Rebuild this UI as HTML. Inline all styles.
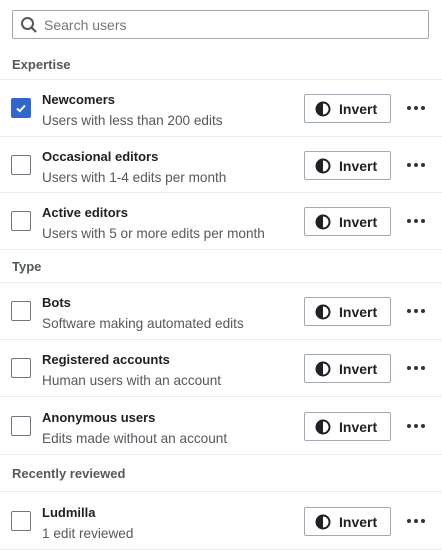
<!DOCTYPE html>
<html><head><style>
*{box-sizing:border-box;margin:0;padding:0}
body{width:442px;height:555px;background:#fff;font-family:"Liberation Sans",sans-serif;color:#202122;position:relative;overflow:hidden}
.search{position:absolute;left:12px;top:10px;width:417px;height:29px;border:1px solid #a2a9b1;border-radius:2px}
.search span{position:absolute;left:31px;top:6px;font-size:14px;color:#72777d}
.search svg{position:absolute;left:7px;top:5px}
.hdr{position:absolute;left:12px;font-size:13px;color:#54595d;font-weight:bold}
.line{position:absolute;left:0;width:442px;height:1px;background:#eaecf0}
.row{position:absolute;left:0;width:442px;height:56px}
.cb{position:absolute;left:11px;top:18px;width:20px;height:20px;border:1px solid #72777d;border-radius:2px;background:#fff}
.cb.on{background:#36c;border-color:#36c}
.t{position:absolute;left:42px;top:12px;font-size:13px;font-weight:bold}
.s{position:absolute;left:42px;top:33px;font-size:13.6px;color:#54595d}
.btn{position:absolute;left:304px;top:14px;width:87px;height:29px;border:1px solid #a2a9b1;border-radius:2px;font-size:14px;font-weight:bold;color:#202122}
.btn svg{position:absolute;left:10px;top:6px}
.btn span{position:absolute;left:34px;top:6px}
.dots{position:absolute;left:407px;top:26px}
.dots i{position:absolute;top:0;width:4px;height:4px;border-radius:50%;background:#333}
</style></head><body>
<div class="search"><svg width="18" height="18" viewBox="0 0 18 18"><circle cx="7.5" cy="7.5" r="5.5" fill="none" stroke="#54595d" stroke-width="2"/><path d="M11.5 11.5L16 16" stroke="#54595d" stroke-width="2.2"/></svg><span>Search users</span></div>
<div class="hdr" style="top:57px">Expertise</div>
<div class="line" style="top:79px"></div>

<div class="row" style="top:80px"><div class="cb on"><svg width="18" height="18" viewBox="0 0 18 18"><path d="M5 9.5l2.8 2.6L13 6.5" fill="none" stroke="#fff" stroke-width="2"/></svg></div><div class="t">Newcomers</div><div class="s">Users with less than 200 edits</div><div class="btn"><svg width="16" height="16" viewBox="0 0 16 16"><circle cx="8" cy="8" r="6.5" fill="none" stroke="#202122" stroke-width="2"/><path d="M8 1.5a6.5 6.5 0 0 0 0 13z" fill="#202122"/></svg><span>Invert</span></div><div class="dots"><i style="left:0"></i><i style="left:7px"></i><i style="left:14px"></i></div></div>
<div class="line" style="top:136px"></div>

<div class="row" style="top:137px"><div class="cb"></div><div class="t">Occasional editors</div><div class="s">Users with 1-4 edits per month</div><div class="btn"><svg width="16" height="16" viewBox="0 0 16 16"><circle cx="8" cy="8" r="6.5" fill="none" stroke="#202122" stroke-width="2"/><path d="M8 1.5a6.5 6.5 0 0 0 0 13z" fill="#202122"/></svg><span>Invert</span></div><div class="dots"><i style="left:0"></i><i style="left:7px"></i><i style="left:14px"></i></div></div>
<div class="line" style="top:192px"></div>

<div class="row" style="top:193px"><div class="cb"></div><div class="t">Active editors</div><div class="s">Users with 5 or more edits per month</div><div class="btn"><svg width="16" height="16" viewBox="0 0 16 16"><circle cx="8" cy="8" r="6.5" fill="none" stroke="#202122" stroke-width="2"/><path d="M8 1.5a6.5 6.5 0 0 0 0 13z" fill="#202122"/></svg><span>Invert</span></div><div class="dots"><i style="left:0"></i><i style="left:7px"></i><i style="left:14px"></i></div></div>
<div class="line" style="top:249px"></div>

<div class="hdr" style="top:259px">Type</div>
<div class="line" style="top:282px"></div>

<div class="row" style="top:283px"><div class="cb"></div><div class="t">Bots</div><div class="s">Software making automated edits</div><div class="btn"><svg width="16" height="16" viewBox="0 0 16 16"><circle cx="8" cy="8" r="6.5" fill="none" stroke="#202122" stroke-width="2"/><path d="M8 1.5a6.5 6.5 0 0 0 0 13z" fill="#202122"/></svg><span>Invert</span></div><div class="dots"><i style="left:0"></i><i style="left:7px"></i><i style="left:14px"></i></div></div>
<div class="line" style="top:339px"></div>

<div class="row" style="top:340px"><div class="cb"></div><div class="t">Registered accounts</div><div class="s">Human users with an account</div><div class="btn"><svg width="16" height="16" viewBox="0 0 16 16"><circle cx="8" cy="8" r="6.5" fill="none" stroke="#202122" stroke-width="2"/><path d="M8 1.5a6.5 6.5 0 0 0 0 13z" fill="#202122"/></svg><span>Invert</span></div><div class="dots"><i style="left:0"></i><i style="left:7px"></i><i style="left:14px"></i></div></div>
<div class="line" style="top:396px"></div>

<div class="row" style="top:398px"><div class="cb"></div><div class="t">Anonymous users</div><div class="s">Edits made without an account</div><div class="btn"><svg width="16" height="16" viewBox="0 0 16 16"><circle cx="8" cy="8" r="6.5" fill="none" stroke="#202122" stroke-width="2"/><path d="M8 1.5a6.5 6.5 0 0 0 0 13z" fill="#202122"/></svg><span>Invert</span></div><div class="dots"><i style="left:0"></i><i style="left:7px"></i><i style="left:14px"></i></div></div>
<div class="line" style="top:454px"></div>

<div class="hdr" style="top:466px">Recently reviewed</div>
<div class="line" style="top:491px"></div>

<div class="row" style="top:493px"><div class="cb"></div><div class="t">Ludmilla</div><div class="s">1 edit reviewed</div><div class="btn"><svg width="16" height="16" viewBox="0 0 16 16"><circle cx="8" cy="8" r="6.5" fill="none" stroke="#202122" stroke-width="2"/><path d="M8 1.5a6.5 6.5 0 0 0 0 13z" fill="#202122"/></svg><span>Invert</span></div><div class="dots"><i style="left:0"></i><i style="left:7px"></i><i style="left:14px"></i></div></div>
<div class="line" style="top:549px"></div>
</body></html>
